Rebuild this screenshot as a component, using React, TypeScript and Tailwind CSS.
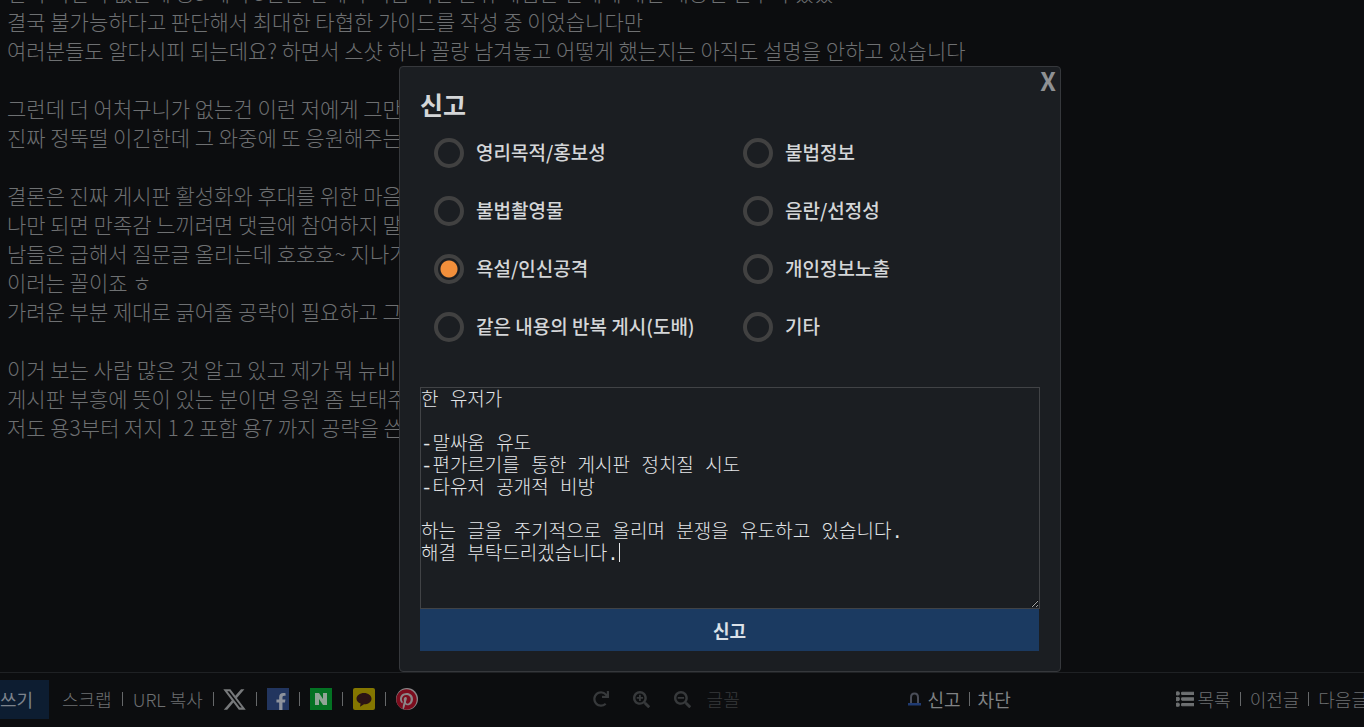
import { useState } from "react";
import type { ReactNode } from "react";
import { FaFacebookF, FaListUl, FaPinterest, FaRedo, FaSearchMinus, FaSearchPlus } from "react-icons/fa";
import { FaXTwitter } from "react-icons/fa6";

const articleLines = [
  "번역 의견이 없는데 용3 에서 3번은 전에서 처음 버전 분위 게임은 전체에 대한 내용인 전부다 있었고",
  "결국 불가능하다고 판단해서 최대한 타협한 가이드를 작성 중 이었습니다만",
  "여러분들도 알다시피 되는데요? 하면서 스샷 하나 꼴랑 남겨놓고 어떻게 했는지는 아직도 설명을 안하고 있습니다",
  "",
  "그런데 더 어처구니가 없는건 이런 저에게 그만",
  "진짜 정뚝떨 이긴한데 그 와중에 또 응원해주는",
  "",
  "결론은 진짜 게시판 활성화와 후대를 위한 마음",
  "나만 되면 만족감 느끼려면 댓글에 참여하지 말",
  "남들은 급해서 질문글 올리는데 호호호~ 지나가",
  "이러는 꼴이죠 ㅎ",
  "가려운 부분 제대로 긁어줄 공략이 필요하고 그",
  "",
  "이거 보는 사람 많은 것 알고 있고 제가 뭐 뉴비",
  "게시판 부흥에 뜻이 있는 분이면 응원 좀 보태주",
  "저도 용3부터 저지 1 2 포함 용7 까지 공략을 쓴",
];

const reasons = [
  "영리목적/홍보성",
  "불법정보",
  "불법촬영물",
  "음란/선정성",
  "욕설/인신공격",
  "개인정보노출",
  "같은 내용의 반복 게시(도배)",
  "기타",
];

const initialDetail = `한 유저가

-말싸움 유도
-편가르기를 통한 게시판 정치질 시도
-타유저 공개적 비방

하는 글을 주기적으로 올리며 분쟁을 유도하고 있습니다.
해결 부탁드리겠습니다.`;

function Divider() {
  return <span aria-hidden="true" className="h-3.5 w-px shrink-0 bg-[#66686a]" />;
}

function Share({ label, className, children }: { label: string; className: string; children: ReactNode }) {
  return (
    <a href="#share" aria-label={label} className={`flex size-[22px] shrink-0 items-center justify-center ${className}`}>
      {children}
    </a>
  );
}

function Toolbar() {
  return (
    <footer className="flex h-[55px] shrink-0 items-center justify-between overflow-hidden border-t border-[#1f2124] pb-0.5 text-[18px] font-light whitespace-nowrap text-[#6e7072]">
      <div className="flex items-center gap-2.5 pr-2.5">
        <button className="mr-[3px] flex h-[39px] w-[49px] items-center bg-[#0d1d31] font-normal text-[#7c838c]">쓰기</button>
        <a href="#scrap">스크랩</a>
        <Divider />
        <a href="#copy">URL 복사</a>
        <Divider />
        <Share label="X" className="text-[#77797b]">
          <FaXTwitter size={25} className="shrink-0" />
        </Share>
        <Divider />
        <Share label="Facebook" className="items-end bg-[#22355f] pl-1.5 text-[#8d929c]">
          <FaFacebookF size={17} />
        </Share>
        <Divider />
        <Share label="Naver" className="bg-[#037223] text-[#8fa596]">
          <svg width="12" height="12" viewBox="0 0 12 12" fill="currentColor">
            <path d="M0 0h4l4 6V0h4v12H8L4 6v6H0z" />
          </svg>
        </Share>
        <Divider />
        <Share label="KakaoTalk" className="rounded-xs bg-[#847600] text-[#2b1414]">
          <svg width="16" height="15" viewBox="0 0 16 15" fill="currentColor">
            <path d="M8 1c4.200 0 7.500 2.500 7.500 5.700S12.200 12.300 8 12.300L4 14.800l.6-3.300C2 10.500.5 8.800.5 6.700.5 3.500 3.800 1 8 1z" />
          </svg>
        </Share>
        <Divider />
        <Share label="Pinterest" className="rounded-full bg-[#8b8587] text-[#7c0c1d]">
          <FaPinterest size={21} />
        </Share>
      </div>
      <div className="flex items-center text-[#37393b]">
        <button aria-label="새로고침" className="mr-6">
          <FaRedo size={16} />
        </button>
        <button aria-label="확대" className="mr-6">
          <FaSearchPlus size={17} />
        </button>
        <button aria-label="축소" className="mr-4">
          <FaSearchMinus size={17} />
        </button>
        <button>글꼴</button>
      </div>
      <div className="flex items-center gap-2 pl-1 font-normal text-[#808284]">
        <button className="flex items-center gap-1.5">
          <svg width="13" height="14" viewBox="0 0 13 14" fill="none">
            <path d="M3 11V5.500Q3 1.500 6.500 1.500T10 5.500V11" stroke="#4a4d58" strokeWidth="2" />
            <path d="M0 11h13v2.500H0z" fill="#1f3a72" />
          </svg>
          신고
        </button>
        <Divider />
        <button>차단</button>
      </div>
      <div className="-mr-1 flex items-center gap-[9px]">
        <a href="#list" className="flex items-center gap-1">
          <FaListUl size={18} stroke="currentColor" strokeWidth={30} />
          목록
        </a>
        <Divider />
        <a href="#prev">이전글</a>
        <Divider />
        <a href="#next">다음글</a>
      </div>
    </footer>
  );
}

function ReportDialog() {
  const [reason, setReason] = useState("욕설/인신공격");
  const [detail, setDetail] = useState(initialDetail);
  return (
    <form
      role="dialog"
      aria-labelledby="report-title"
      onSubmit={(e) => e.preventDefault()}
      className="absolute top-[66px] left-[399px] w-[662px] rounded-sm border border-[#36383c] bg-[#1b1e22] p-5 text-[#d4d6d8]"
    >
      <button type="button" aria-label="닫기" className="absolute top-0 right-1 text-[25px] leading-[26px] font-bold text-[#8f9193]">
        X
      </button>
      <h2 id="report-title" className="text-[25px] leading-[34px] font-bold">
        신고
      </h2>
      <fieldset aria-labelledby="report-title" className="grid grid-cols-2 gap-x-3 pt-[17px] pl-3.5 text-[19px] font-medium">
        {reasons.map((item) => (
          <label key={item} className="flex h-[58px] items-start gap-3">
            <input
              type="radio"
              name="reason"
              value={item}
              checked={reason === item}
              onChange={() => setReason(item)}
              className="size-[30px] shrink-0 appearance-none rounded-full border-4 border-[#414141] checked:bg-[radial-gradient(circle,#f28f3b_8px,transparent_9px)]"
            />
            <span className="leading-7">{item}</span>
          </label>
        ))}
      </fieldset>
      <div className="relative mt-[17px]">
        <textarea
          aria-label="신고 내용"
          value={detail}
          onChange={(e) => setDetail(e.target.value)}
          className="block h-[222px] w-full resize overflow-hidden border border-[#414346] bg-transparent pt-0.5 font-['Liberation_Mono','Noto_Sans_CJK_KR',monospace] text-[19px] leading-[22px] font-light text-[#e4e6e8] outline-none"
        />
        <span aria-hidden="true" className="absolute top-[156px] left-[199px] h-[19px] w-px bg-[#e4e6e8]" />
      </div>
      <button type="submit" className="block h-[42px] w-full border-r border-[#1b1e22] bg-[#1b3a61] text-[18px] leading-6 font-bold text-[#dbe1e8]">
        신고
      </button>
    </form>
  );
}

export default function App() {
  return (
    <div className="relative flex h-screen flex-col overflow-hidden bg-[#0c0d0f] font-['Noto_Sans_CJK_KR',sans-serif]">
      <main className="min-h-0 flex-1 overflow-hidden pl-[7px]">
        <article className="-mt-[22px] text-[21px] leading-[29px] font-light whitespace-nowrap text-[#6e7072]">
          {articleLines.map((line, i) => (
            <p key={i} className="min-h-[29px]">
              {line}
            </p>
          ))}
        </article>
      </main>
      <Toolbar />
      <ReportDialog />
    </div>
  );
}
